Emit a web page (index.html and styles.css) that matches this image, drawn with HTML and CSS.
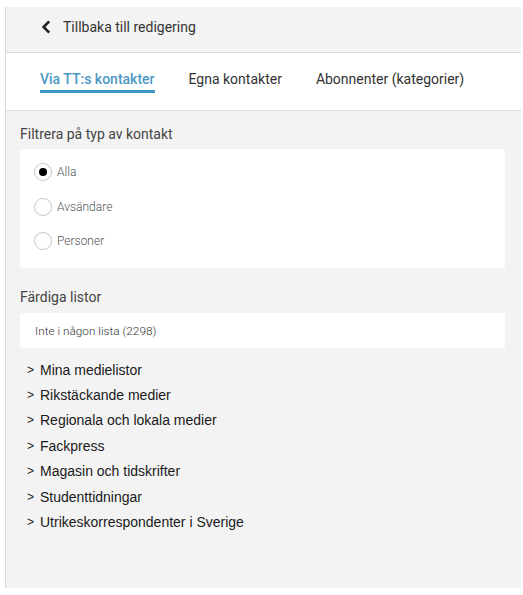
FILE: index.html
```html
<!DOCTYPE html>
<html lang="sv">
<head>
<meta charset="utf-8">
<link rel="stylesheet" href="styles.css">
</head>
<body>
<div class="panel">
  <div class="topbar">
    <svg class="back-icon" width="10" height="14" viewBox="0 0 10 14"><path d="M8.2 1.3 L2.6 7 L8.2 12.7" fill="none" stroke="#222" stroke-width="2.6"/></svg>
    <span class="back-text">Tillbaka till redigering</span>
  </div>
  <div class="tabs">
    <span class="tab active">Via TT:s kontakter</span>
    <span class="tab">Egna kontakter</span>
    <span class="tab">Abonnenter (kategorier)</span>
  </div>
  <div class="content">
    <div class="section-title">Filtrera på typ av kontakt</div>
    <div class="card radios">
      <div class="radio-row"><span class="radio checked"></span><span class="radio-label">Alla</span></div>
      <div class="radio-row"><span class="radio"></span><span class="radio-label">Avsändare</span></div>
      <div class="radio-row"><span class="radio"></span><span class="radio-label">Personer</span></div>
    </div>
    <div class="section-title second">Färdiga listor</div>
    <div class="card single">Inte i någon lista (2298)</div>
    <ul class="lists">
      <li><span class="chev">&gt;</span>Mina medielistor</li>
      <li><span class="chev">&gt;</span>Rikstäckande medier</li>
      <li><span class="chev">&gt;</span>Regionala och lokala medier</li>
      <li><span class="chev">&gt;</span>Fackpress</li>
      <li><span class="chev">&gt;</span>Magasin och tidskrifter</li>
      <li><span class="chev">&gt;</span>Studenttidningar</li>
      <li><span class="chev">&gt;</span>Utrikeskorrespondenter i Sverige</li>
    </ul>
  </div>
</div>
</body>
</html>
```
FILE: styles.css
```css
html, body {
  margin: 0;
  padding: 0;
  background: #fff;
}
body {
  font-family: Roboto, "Liberation Sans", sans-serif;
  color: #333;
}
.panel {
  margin: 7px 2px 0 5px;
  height: 581px;
  border-left: 1px solid #d9d9d9;
  background: #f3f3f3;
  box-sizing: border-box;
}
.topbar {
  height: 46px;
  box-sizing: border-box;
  border-bottom: 1px solid #dcdcdc;
  display: flex;
  align-items: center;
  padding-left: 35px;
  padding-bottom: 5px;
}
.back-icon {
  margin-right: 12px;
}
.back-text {
  font-size: 14px;
  color: #333;
}
.tabs {
  height: 58px;
  box-sizing: border-box;
  background: #fff;
  border-bottom: 1px solid #dcdcdc;
  display: flex;
  align-items: stretch;
  padding-left: 34px;
  padding-bottom: 6px;
}
.tab {
  display: flex;
  align-items: center;
  font-size: 14px;
  color: #333;
  margin-right: 34px;
  box-sizing: border-box;
}
.tab.active {
  color: #4c98c6;
  font-weight: 500;
  position: relative;
}
.tab.active::after {
  content: "";
  position: absolute;
  left: 0;
  right: 0;
  top: 37px;
  height: 3px;
  background: #3b94c4;
}
.content {
  padding: 14px 16px 0 14px;
}
.section-title {
  font-size: 14px;
  color: #444;
  line-height: 18px;
  margin-bottom: 6px;
}
.section-title.second {
  margin-top: 20px;
  margin-bottom: 7px;
}
.card {
  background: #fff;
  border-radius: 2px;
}
.radios {
  height: 119px;
  box-sizing: border-box;
  padding: 6px 0 0 14px;
}
.radio-row {
  display: flex;
  align-items: center;
  height: 34.5px;
}
.radio {
  width: 18px;
  height: 18px;
  border: 1px solid #c9c9c9;
  border-radius: 50%;
  box-sizing: border-box;
  margin-right: 5px;
  display: flex;
  align-items: center;
  justify-content: center;
  box-shadow: 0 0 1px rgba(0,0,0,0.08);
}
.radio.checked::before {
  content: "";
  width: 8px;
  height: 8px;
  border-radius: 50%;
  background: #000;
}
.radio-label {
  font-size: 12px;
  color: #555;
  font-weight: 300;
}
.single {
  height: 35px;
  display: flex;
  align-items: center;
  padding-left: 15px;
  font-size: 11.8px;
  font-weight: 300;
  color: #333;
}
.lists {
  list-style: none;
  margin: 9px 0 0 0;
  padding: 0 0 0 7px;
  font-family: "Liberation Sans", Arial, sans-serif;
  font-size: 14px;
  color: #1a1a1a;
}
.lists li {
  height: 25.4px;
  display: flex;
  align-items: center;
}
.lists li:first-child {
  margin-top: 0;
}
.chev {
  font-size: 12px;
  width: 13px;
  color: #222;
}
```
